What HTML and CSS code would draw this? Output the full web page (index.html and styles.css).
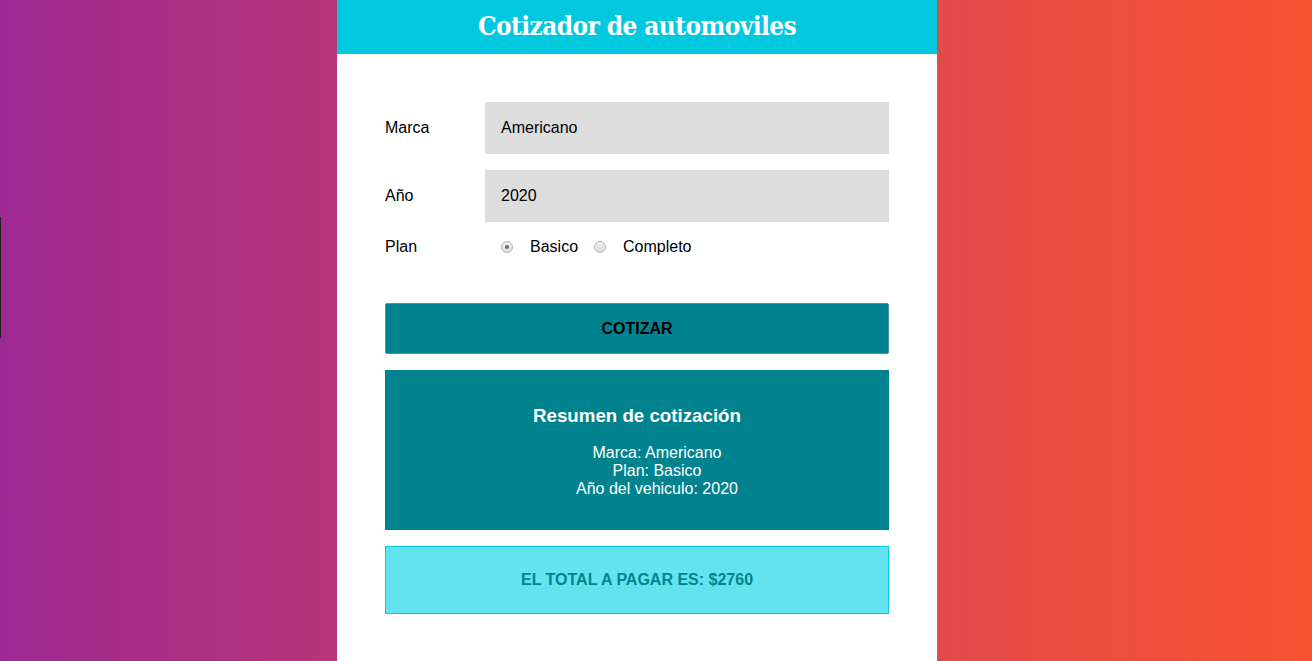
FILE: index.html
```html
<!DOCTYPE html>
<html lang="es">
<head>
<meta charset="utf-8">
<title>Cotizador de automoviles</title>
<link rel="stylesheet" href="styles.css">
</head>
<body>
<div class="edge"></div>
<main class="app">
  <header class="app-header">
    <h1 class="title">Cotizador de automoviles</h1>
  </header>
  <form class="form">
    <div class="field">
      <label class="label">Marca</label>
      <div class="select">Americano</div>
    </div>
    <div class="field">
      <label class="label">Año</label>
      <div class="select">2020</div>
    </div>
    <div class="field field-plan">
      <label class="label">Plan</label>
      <div class="radios">
        <input class="radio" type="radio" name="plan" checked>
        <span class="radio-label">Basico</span>
        <input class="radio" type="radio" name="plan">
        <span class="radio-label">Completo</span>
      </div>
    </div>
    <button class="btn" type="button">COTIZAR</button>
  </form>
  <section class="summary">
    <h2 class="summary-title">Resumen de cotización</h2>
    <ul class="summary-list">
      <li>Marca: Americano</li>
      <li>Plan: Basico</li>
      <li>Año del vehiculo: 2020</li>
    </ul>
  </section>
  <div class="total">EL TOTAL A PAGAR ES: $2760</div>
</main>
</body>
</html>
```
FILE: styles.css
```css
html, body {
  margin: 0;
  height: 100%;
}
body {
  background: linear-gradient(to right, #9f2993 0%, #e24a4a 71%, #f85230 100%);
  font-family: "Liberation Sans", Arial, sans-serif;
  font-size: 16px;
  color: #000;
  display: flex;
  align-items: stretch;
  overflow: hidden;
}
.edge {
  position: absolute;
  left: 0;
  top: 217px;
  width: 1px;
  height: 121px;
  background: #222;
}
.app {
  width: 600px;
  margin-left: calc(50% - 319px);
  background: #fff;
  min-height: 100%;
}
.app-header {
  background: #00c8de;
  height: 54px;
  display: flex;
  align-items: center;
  justify-content: center;
}
.title {
  margin: 0;
  color: #fff;
  font-family: "DejaVu Serif", serif;
  font-stretch: condensed;
  font-weight: bold;
  font-size: 26px;
  letter-spacing: -0.6px;
  line-height: 1;
  padding-bottom: 2px;
}
.form {
  padding: 48px 48px 0;
  display: flex;
  flex-direction: column;
  gap: 16px;
}
.field {
  display: flex;
  align-items: center;
}
.label {
  width: 100px;
  flex: none;
}
.select {
  flex: 1;
  height: 52px;
  background: #ddd;
  display: flex;
  align-items: center;
  padding-left: 16px;
}
.field-plan {
  height: 17px;
}
.radios {
  display: flex;
  align-items: center;
  padding-left: 16px;
}
.radio {
  appearance: none;
  -webkit-appearance: none;
  width: 12px;
  height: 12px;
  margin: 0;
  border-radius: 50%;
  border: 1px solid #b5b5b5;
  background: linear-gradient(#f2f2f2, #dcdcdc);
  display: inline-flex;
  align-items: center;
  justify-content: center;
  box-sizing: border-box;
}
.radio:checked::after {
  content: "";
  width: 4px;
  height: 4px;
  border-radius: 50%;
  background: #6b6b6b;
}
.radio-label {
  margin: 0 16px 0 17px;
}
.btn {
  margin-top: 32px;
  height: 51px;
  background: #00838f;
  border: 1px solid #4a90c8;
  border-radius: 2px;
  font-family: "Liberation Sans", Arial, sans-serif;
  font-weight: bold;
  font-size: 16px;
  color: #000;
}
.summary {
  margin: 16px 48px 0;
  background: #00838f;
  color: #fff;
  text-align: center;
  padding: 35px 0 32px;
}
.summary-title {
  margin: 0;
  font-size: 18.72px;
  line-height: 22px;
}
.summary-list {
  list-style: none;
  margin: 17px 0 0;
  padding-left: 40px;
  line-height: 18px;
}
.total {
  margin: 16px 48px 0;
  height: 68px;
  box-sizing: border-box;
  background: #63e3f0;
  border: 1px solid #00c8de;
  color: #00838f;
  font-weight: bold;
  display: flex;
  align-items: center;
  justify-content: center;
}
```
